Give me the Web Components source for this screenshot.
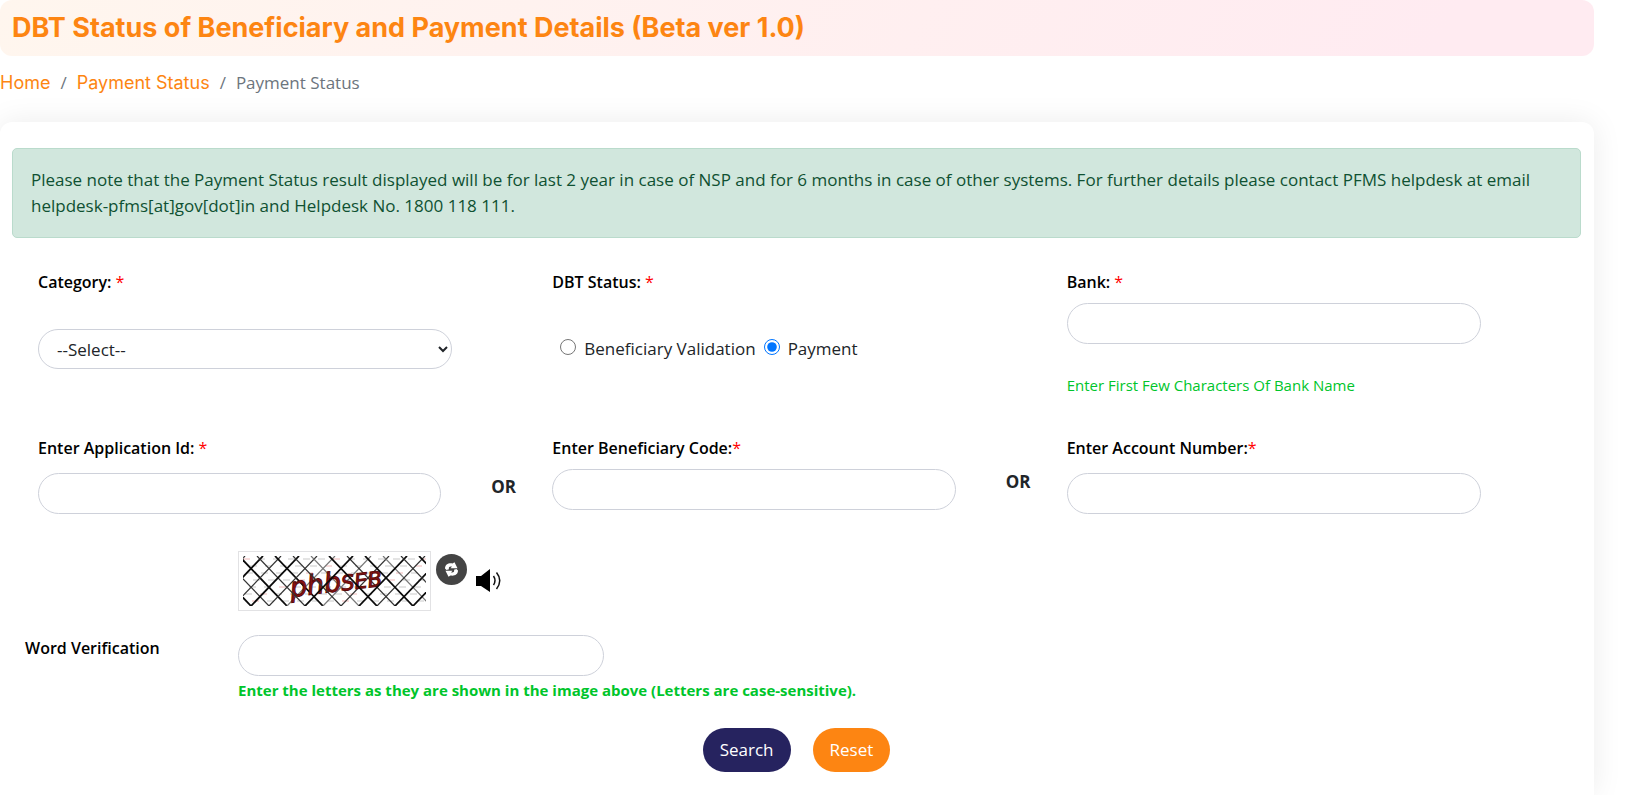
<!DOCTYPE html>
<html lang="en">
<head>
<meta charset="utf-8">
<meta name="viewport" content="width=device-width, initial-scale=1">
<title>Payment Status</title>
<style>
  body {
    margin: 0;
    background: #fff;
    color: #212529;
    font: 17px/26px "Open Sans", "Noto Sans", sans-serif;
    --orange: #fd8512;
    --navy: #26235f;
    --green: #00c52b;
    --line: #ced1da;
    --display: Inter, "Open Sans", sans-serif;
  }
</style>
</head>
<body>
<payment-status-page></payment-status-page>

<script>
const define = (name, html, setup) => {
  const template = document.createElement('template');
  template.innerHTML = html;
  customElements.define(name, class extends HTMLElement {
    constructor() {
      super();
      this.attachShadow({ mode: 'open' }).append(template.content.cloneNode(true));
    }
    connectedCallback() {
      if (setup && !this.ready) { this.ready = true; setup(this, this.shadowRoot); }
    }
  });
};

const controlStyles = `
  * { box-sizing: border-box; }
  input[type=text], select {
    display: block; width: 100%; height: 41px; margin: 0;
    border: 1px solid var(--line); border-radius: 21px;
    background: #fff; color: #212529; font: inherit; padding: 0 18px;
  }
`;

define('page-banner', `
  <style>
    :host { display: block; border-radius: 12px; padding: 9px 12px;
      background: linear-gradient(120deg, #fff6ee, #ffebf1 90%); }
    h1 { margin: 0; font: 700 27px/38px var(--display); color: var(--orange); }
  </style>
  <h1><slot></slot></h1>`);

define('bread-crumbs', `
  <style>
    :host { display: block; margin: 14px 0 26px; color: #6c757d; }
    ol { display: flex; margin: 0; padding: 0; list-style: none; }
    li + li::before { content: "/"; padding: 0 10px; }
    a { color: var(--orange); text-decoration: none; font-family: var(--display); font-size: 18px; }
  </style>
  <nav aria-label="Breadcrumb"><ol>
    <li><a href="#home">Home</a></li>
    <li><a href="#payment-status">Payment Status</a></li>
    <li aria-current="page">Payment Status</li>
  </ol></nav>`);

define('info-alert', `
  <style>
    :host { display: block; padding: 18px; border: 1px solid #badbcc; border-radius: 5px;
      background: #d1e7dd; color: #0f5132; }
  </style>
  <slot></slot>`);

define('text-field', `
  <style>${controlStyles}
    :host { display: block; }
    label { display: block; margin-bottom: 8px; color: #000; font-weight: 600; font-size: 16px; }
    :host([roomy]) label { margin-bottom: 12px; }
    i { color: red; font-style: normal; font-weight: 400; white-space: pre; }
    p { margin: 29px 0 0; color: var(--green); font-size: 15px; line-height: 24px; }
    p:empty { display: none; }
  </style>
  <label for="box"><span></span><i>*</i></label>
  <input id="box" type="text" autocomplete="off">
  <p></p>`, (el, root) => {
  root.querySelector('span').textContent = el.getAttribute('label');
  if (el.hasAttribute('spaced')) root.querySelector('i').textContent = ' *';
  root.querySelector('p').textContent = el.getAttribute('hint') || '';
});

define('select-field', `
  <style>${controlStyles}
    :host { display: block; }
    label { display: block; margin-bottom: 34px; color: #000; font-weight: 600; font-size: 16px; }
    i { color: red; font-style: normal; font-weight: 400; }
    select { width: calc(100% - 76px); height: 40px; padding: 0 4px 0 14px; }
  </style>
  <label for="box">Category: <i>*</i></label>
  <select id="box"><option>--Select--</option></select>`);

define('status-choice', `
  <style>
    :host { display: block; }
    fieldset { margin: 0; padding: 0; border: 0; }
    legend { padding: 0; margin-bottom: 41px; color: #000; font-weight: 600; font-size: 16px; }
    i { color: red; font-style: normal; font-weight: 400; }
    .options { display: flex; gap: 8px; padding-left: 8px; }
    label { display: flex; gap: 8px; }
    input { width: 16px; height: 16px; margin: 3px 0 0; accent-color: #0075ff; }
  </style>
  <fieldset>
    <legend>DBT Status: <i>*</i></legend>
    <div class="options">
      <label><input type="radio" name="status">Beneficiary Validation</label>
      <label><input type="radio" name="status" checked>Payment</label>
    </div>
  </fieldset>`);

define('or-pair', `
  <style>
    :host { display: grid; grid-template-columns: minmax(0, 1fr) 87px; }
    b { padding: 34px 0 0 50px; }
    :host([low]) b { padding-top: 39px; }
  </style>
  <slot></slot><b>OR</b>`);

define('captcha-picture', `
  <style>
    :host { display: block; padding: 4px; border: 1px solid #e2e2e4; }
    svg { display: block; }
    text { font: italic 400 27px "DejaVu Sans", sans-serif; fill: #8a1212; stroke: #5a0a0a; }
    .small { font-size: 21px; }
  </style>
  <svg width="183" height="50" viewBox="0 0 183 50" role="img" aria-label="Verification letters">
    <g class="noise" stroke="#c9c9c9"></g>
    <g class="net" fill="none"></g>
    <text transform="translate(48 41) rotate(-7)">phb<tspan class="small">SEB</tspan></text>
    <g class="over" fill="none"></g>
  </svg>`, (el, root) => {
  const line = (sel, x1, y1, x2, y2, attrs) => {
    const l = document.createElementNS('http://www.w3.org/2000/svg', 'line');
    Object.entries({ x1, y1, x2, y2, ...attrs }).forEach(([k, v]) => l.setAttribute(k, v));
    root.querySelector(sel).append(l);
  };
  for (let row = 0; row < 7; row++) {
    for (let col = 0; col < 13; col++) {
      const x = col * 15 + (row * 7) % 11, y = 3 + row * 7;
      line('.noise', x, y, x + 7, y, (row + col) % 6 ? {} : { stroke: '#f0b8b8' });
    }
  }
  const dark = { stroke: '#0a0a0a', 'stroke-width': 1.8 };
  const mid = { stroke: '#333', 'stroke-width': 1.2 };
  const pale = { stroke: '#777', 'stroke-width': 1.2 };
  const falling = [dark, mid, dark, mid, dark, mid, pale, dark, mid, dark, pale, mid, dark];
  const rising = [mid, dark, mid, dark, mid, pale, dark, pale, mid, dark, mid, dark, dark];
  for (let i = 0; i < 13; i++) {
    const x = -40 + i * 18;
    line(i % 2 ? '.over' : '.net', x, 0, x + 48, 50, falling[i]);
    line(i % 3 ? '.net' : '.over', x + 42, 0, x - 6, 50, rising[i]);
  }
});

define('icon-button', `
  <style>
    :host { display: block; }
    button { display: block; padding: 0; border: 0; background: none; cursor: pointer; }
    ::slotted(svg) { display: block; }
  </style>
  <button type="button"><slot></slot></button>`, (el, root) => {
  root.querySelector('button').setAttribute('aria-label', el.getAttribute('name'));
});

define('word-verification', `
  <style>${controlStyles}
    :host { display: grid; grid-template-columns: 213px minmax(0, 1fr); margin: 37px 0 0 13px; }
    .challenge { grid-column: 2; display: flex; align-items: flex-start; margin-bottom: 24px; }
    .refresh { margin: 3px 9px 0 5px; }
    .listen { margin-top: 18px; }
    label { color: #000; font-weight: 600; font-size: 16px; }
    input[type=text] { max-width: 366px; }
    p { margin: 2px 0 0; color: var(--green); font-weight: 700; font-size: 15px; line-height: 24px; }
  </style>
  <div class="challenge">
    <captcha-picture></captcha-picture>
    <icon-button class="refresh" name="New letters">
      <svg width="31" height="31" viewBox="0 0 31 31">
        <circle cx="15.500" cy="15.500" r="15.500" fill="#444"/>
        <path fill="#fff" d="M9 14.500C9 10.500 12.500 8.800 16.500 9.500L18.500 8.200L21.500 14.200H14.500L16 12.600C13.500 12 12.300 13.500 13 15.200L10.500 16ZM22 16.500C22 20.500 18.500 22.200 14.500 21.500L12.500 22.800L9.500 16.800H16.500L15 18.400C17.500 19 18.700 17.500 18 15.800L20.500 15Z"/>
      </svg>
    </icon-button>
    <icon-button class="listen" name="Listen to the letters">
      <svg width="26" height="24" viewBox="0 0 26 24">
        <path d="M0 7H5L14 0V23L5 17H0Z"/>
        <path fill="none" stroke="#111" stroke-width="1.500" d="M17.500 7Q20.500 11.500 17.500 16M20.500 3.500Q27 11.500 20.500 20"/>
      </svg>
    </icon-button>
  </div>
  <label for="word">Word Verification</label>
  <div>
    <input id="word" type="text" autocomplete="off">
    <p>Enter the letters as they are shown in the image above (Letters are case-sensitive).</p>
  </div>`);

define('pill-button', `
  <style>
    :host { display: block; }
    button { height: 44px; padding: 0 17px; border: 0; border-radius: 22px;
      background: var(--fill); color: #fff; font: inherit; cursor: pointer; }
  </style>
  <button type="button"><slot></slot></button>`);

define('payment-status-page', `
  <style>
    :host { display: flex; flex-direction: column; min-height: 100vh; box-sizing: border-box;
      padding-right: 44px; overflow: hidden; }
    main { flex: 1; padding: 26px 13px 20px 12px; border-radius: 12px 12px 0 0; background: #fff;
      box-shadow: 0 0 30px rgba(0, 0, 0, .08); }
    .fields { display: grid; grid-template-columns: repeat(3, minmax(0, 1fr));
      gap: 38px 24px; margin: 31px 0 0; padding: 0 24px 0 26px; }
    .short { width: calc(100% - 76px); }
    .actions { display: flex; justify-content: center; gap: 22px; margin-top: 26px; }
    .search { --fill: var(--navy); }
    .reset { --fill: var(--orange); }
  </style>
  <page-banner>DBT Status of Beneficiary and Payment Details (Beta ver 1.0)</page-banner>
  <bread-crumbs></bread-crumbs>
  <main>
    <info-alert>Please note that the Payment Status result displayed will be for last 2 year in case of NSP and for 6 months in case of other systems. For further details please contact PFMS helpdesk at email helpdesk-pfms[at]gov[dot]in and Helpdesk No. 1800 118 111.</info-alert>
    <form>
      <div class="fields">
        <select-field></select-field>
        <status-choice></status-choice>
        <text-field class="short" label="Bank:" spaced hint="Enter First Few Characters Of Bank Name"></text-field>
        <or-pair low><text-field roomy label="Enter Application Id:" spaced></text-field></or-pair>
        <or-pair><text-field label="Enter Beneficiary Code:"></text-field></or-pair>
        <text-field class="short" roomy label="Enter Account Number:"></text-field>
      </div>
      <word-verification></word-verification>
      <div class="actions">
        <pill-button class="search">Search</pill-button>
        <pill-button class="reset">Reset</pill-button>
      </div>
    </form>
  </main>`);
</script>
</body>
</html>
